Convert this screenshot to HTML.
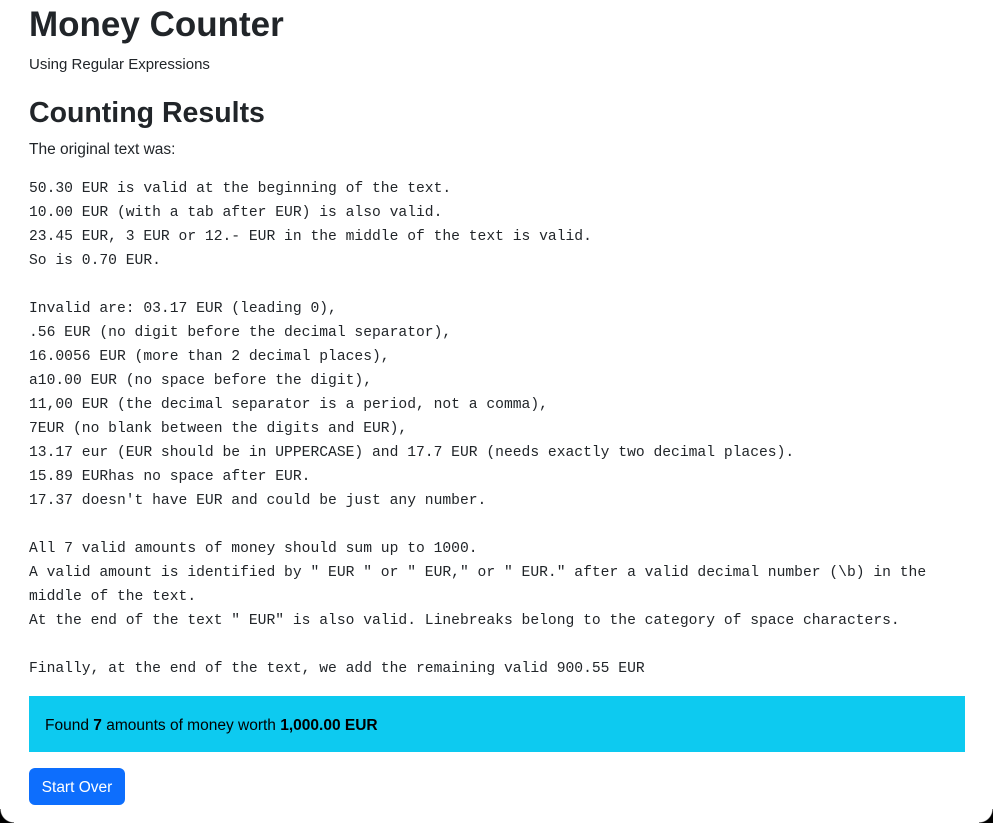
<!DOCTYPE html>
<html><head><meta charset="utf-8"><style>
html,body{margin:0;padding:0;width:993px;height:823px;background:#fff;overflow:hidden;color:#212529;font-family:"Segoe UI","Liberation Sans",sans-serif}
.a{position:absolute;left:29px;white-space:pre}
h1{margin:0;font-size:35px;font-weight:bold;line-height:48px;top:1px}
.sub{font-size:15px;line-height:20px;top:55px}
h2{margin:0;font-size:28.5px;font-weight:bold;line-height:40px;top:93px}
.p{font-size:15.5px;line-height:20px;top:140px}
pre{margin:0;font-family:"Liberation Mono","DejaVu Sans Mono",monospace;font-size:14.67px;line-height:24px;top:177px}
.alert{position:absolute;left:29px;top:696px;width:936px;height:56px;background:#0dcaf0;box-sizing:border-box;padding-left:16px;padding-top:2px;font-size:15.5px;line-height:56px;color:#000}
.btn{position:absolute;left:29px;top:768px;width:96px;height:37px;background:#0d6efd;color:#fff;border-radius:6px;font-size:15.5px;line-height:39px;text-align:center}
.c{position:absolute;width:14px;height:14px;bottom:0}
</style></head><body>
<h1 class="a">Money Counter</h1>
<div class="a sub">Using Regular Expressions</div>
<h2 class="a">Counting Results</h2>
<div class="a p">The original text was:</div>
<pre class="a">50.30 EUR is valid at the beginning of the text.
10.00 EUR (with a tab after EUR) is also valid.
23.45 EUR, 3 EUR or 12.- EUR in the middle of the text is valid.
So is 0.70 EUR.

Invalid are: 03.17 EUR (leading 0),
.56 EUR (no digit before the decimal separator),
16.0056 EUR (more than 2 decimal places),
a10.00 EUR (no space before the digit),
11,00 EUR (the decimal separator is a period, not a comma),
7EUR (no blank between the digits and EUR),
13.17 eur (EUR should be in UPPERCASE) and 17.7 EUR (needs exactly two decimal places).
15.89 EURhas no space after EUR.
17.37 doesn't have EUR and could be just any number.

All 7 valid amounts of money should sum up to 1000.
A valid amount is identified by " EUR " or " EUR," or " EUR." after a valid decimal number (\b) in the
middle of the text.
At the end of the text " EUR" is also valid. Linebreaks belong to the category of space characters.

Finally, at the end of the text, we add the remaining valid 900.55 EUR</pre>
<div class="alert">Found <b>7</b> amounts of money worth <b>1,000.00 EUR</b></div>
<div class="btn">Start Over</div>
<div class="c" style="left:0;background:radial-gradient(circle at 14px 0,transparent 13px,#000 14px)"></div>
<div class="c" style="right:0;background:radial-gradient(circle at 0 0,transparent 13px,#000 14px)"></div>
</body></html>
